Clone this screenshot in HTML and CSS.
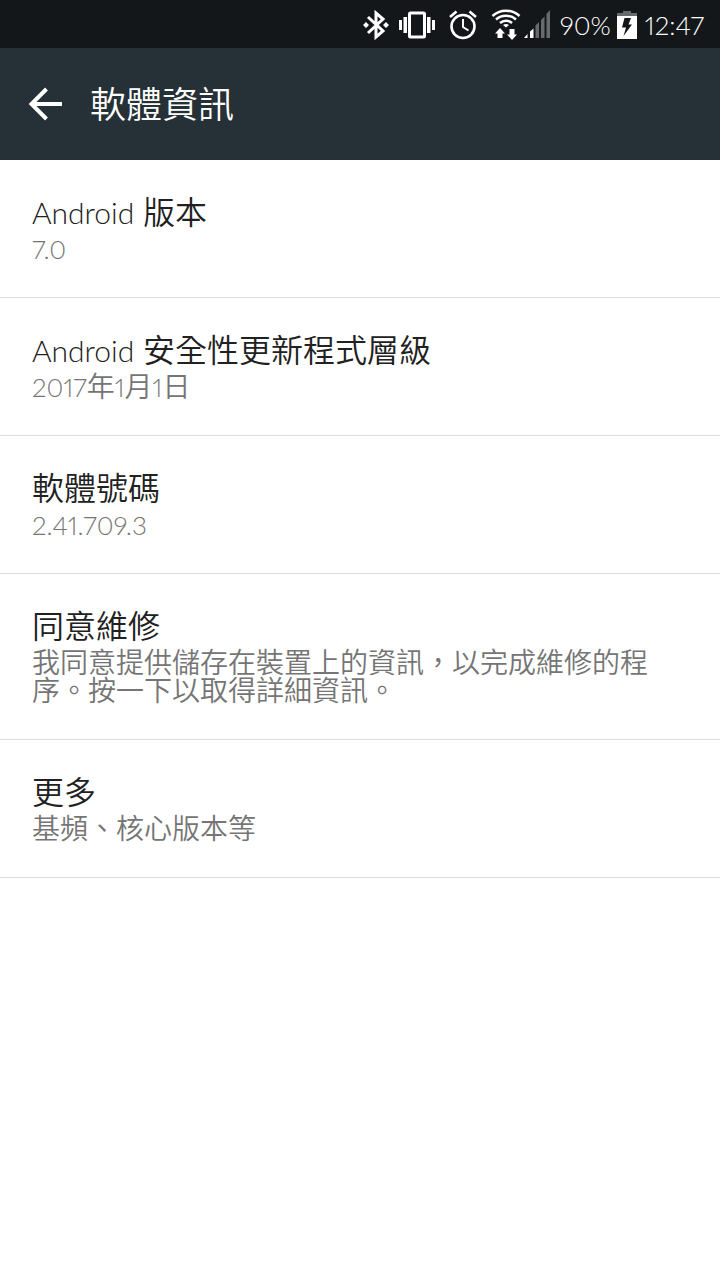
FILE: index.html
```html
<!DOCTYPE html>
<html lang="zh-Hant">
<head>
    <meta charset="UTF-8">
    <meta name="viewport" content="width=device-width, initial-scale=1.0">
    <title>軟體資訊</title>
    <link rel="stylesheet" href="styles.css">
</head>
<body>
    <div class="status-bar">
        <!-- bluetooth -->
        <svg class="icon-bluetooth" width="26" height="30" viewBox="0 0 26 30" fill="none" stroke="#fff" stroke-width="3">
            <path d="M5 7l15 14-7 6V3l7 6L5 23"/>
            <path d="M3 12l3 3-3 3-3-3zM23 12l3 3-3 3-3-3z" fill="#fff" stroke="none"/>
        </svg>
        <!-- vibrate -->
        <svg class="icon-vibrate" width="36" height="30" viewBox="0 0 36 30">
            <rect x="10.5" y="3" width="15" height="24" rx="1" fill="none" stroke="#fff" stroke-width="3"/>
            <path d="M0 10h3v10H0zM4.5 7H8v16H4.5zM28 7h3.5v16H28zM33 10h3v10h-3z" fill="#fff"/>
        </svg>
        <!-- alarm -->
        <svg class="icon-alarm" width="28" height="30" viewBox="0 0 28 30" fill="none" stroke="#fff" stroke-width="2.6">
            <circle cx="14" cy="16.5" r="11.5"/>
            <path d="M14 9v8l5.500 3.5" stroke-width="2"/>
            <path d="M1 7L7.5 1.5M27 7L20.5 1.5"/>
        </svg>
        <!-- wifi -->
        <svg class="icon-wifi" width="30" height="32" viewBox="0 0 30 32">
            <g fill="none" stroke="#fff" stroke-width="2.5">
                <path d="M1.5 7c7.5-7 19.5-7 27 0"/>
                <path d="M5 10.5c5.5-5 14.5-5 20 0"/>
                <path d="M9 14c3.5-3 8.5-3 12 0"/>
            </g>
            <path d="M15 18.5l-3-2.5c2-1.5 4-1.5 6 0z" fill="#fff"/>
            <path d="M9 19l5 5.5h-2.5V29h-5v-4.5H4zM21 31l-5-5.5h2.5V20h5v5.5H26z" fill="#fff"/>
        </svg>
        <!-- signal -->
        <svg class="icon-signal" width="26" height="30" viewBox="0 0 26 30">
            <path d="M0 28h3.5v-4zM6 28h3.5V18.5L6 21.5z" fill="#fff"/>
            <path d="M11.5 28H15V12l-3.5 3.5zM17 28h3.5V6.5L17 10zM22.5 28H26V0l-3.5 4z" fill="#686b6d"/>
        </svg>
        <span class="battery-level">90%</span>
        <!-- battery -->
        <svg class="icon-battery" width="20" height="30" viewBox="0 0 20 30">
            <path d="M6 1h8v2h6v4H0V3h6z" fill="#686b6d"/>
            <path d="M0 6h20v23H0z" fill="#fff"/>
            <path d="M7.5 8H14l-2.5 6.5H15L6.5 26 9 17.5H5z" fill="#14171a"/>
        </svg>
        <span class="clock">12:47</span>
    </div>

    <header class="toolbar">
        <button class="back" type="button" aria-label="返回">
            <svg width="34" height="34" viewBox="0 0 34 34" fill="none" stroke="#fff" stroke-width="4">
                <path d="M34 17H4M18.5 2L3.5 17l15 15"/>
            </svg>
        </button>
        <h1>軟體資訊</h1>
    </header>

    <ul class="settings">
        <li class="item">
            <h2><span class="latin">Android</span> 版本</h2>
            <p><span class="number">7.0</span></p>
        </li>
        <li class="item">
            <h2><span class="latin">Android</span> 安全性更新程式層級</h2>
            <p><span class="number">2017</span>年<span class="number">1</span>月<span class="number">1</span>日</p>
        </li>
        <li class="item">
            <h2>軟體號碼</h2>
            <p><span class="number">2.41.709.3</span></p>
        </li>
        <li>
            <a class="item" href="#repair">
                <h2>同意維修</h2>
                <p>我同意提供儲存在裝置上的資訊，以完成維修的程序。按一下以取得詳細資訊。</p>
            </a>
        </li>
        <li>
            <a class="item" href="#more">
                <h2>更多</h2>
                <p>基頻、核心版本等</p>
            </a>
        </li>
    </ul>
</body>
</html>
```
FILE: styles.css
```css
* {
    box-sizing: border-box;
}
body {
    font-family: Lato, "Noto Sans CJK TC DemiLight", "Noto Sans CJK TC", sans-serif;
    font-weight: 350;
    font-variant-numeric: proportional-nums;
    background-color: #fff;
    color: #212121;
    margin: 0;
}
h1, h2, p, ul {
    margin: 0;
    padding: 0;
    font-weight: 350;
}
.status-bar {
    display: flex;
    align-items: center;
    justify-content: flex-end;
    height: 48px;
    padding: 2px 16px 0 0;
    background-color: #14171a;
    color: #fff;
    font-size: 26px;
}
.icon-vibrate {
    margin-left: 10px;
}
.icon-alarm {
    margin-left: 14px;
}
.icon-wifi {
    margin-left: 14px;
}
.icon-signal {
    margin-left: 3px;
}
.battery-level {
    margin-left: 10px;
}
.icon-battery {
    margin: 0 8px 0 6px;
}
.toolbar {
    display: flex;
    align-items: center;
    height: 112px;
    padding-left: 28px;
    background-color: #263137;
    color: #fff;
}
.back {
    display: flex;
    padding: 0;
    border: none;
    background: none;
    cursor: pointer;
}
.toolbar h1 {
    margin-left: 28px;
    font-size: 36px;
    line-height: 48px;
}
.settings {
    list-style: none;
}
.item {
    display: block;
    padding: 29px 64px 35px 32px;
    border-bottom: 1px solid #dcdcdc;
    color: inherit;
    text-decoration: none;
}
.item h2 {
    font-size: 32px;
    line-height: 45px;
}
.item p {
    color: #757575;
    font-size: 28px;
    line-height: 28px;
}
.latin, .number {
    line-height: 0;
}
.latin {
    font-size: 30px;
}
.number {
    font-size: 26px;
}
```
